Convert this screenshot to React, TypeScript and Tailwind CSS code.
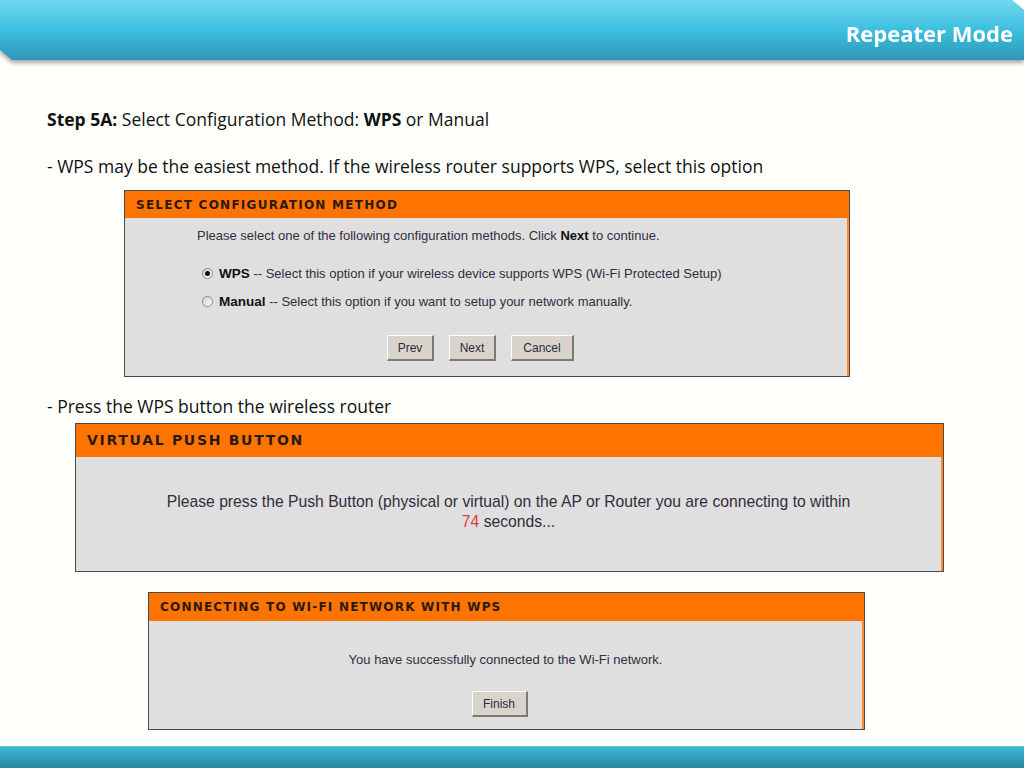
import React from "react";

const slideFont = { fontFamily: "'Open Sans', Lato, sans-serif" };
const uiFont = { fontFamily: "'Liberation Sans', Arial, sans-serif" };
const headFont = { fontFamily: "'DejaVu Sans', Verdana, sans-serif" };

function TopBar() {
  return (
    <div className="relative h-[64px] [filter:drop-shadow(0_3px_2px_rgba(0,0,0,0.35))]">
      <div className="h-[60px] bg-gradient-to-b from-[#6fd6ef] via-[#3cbfe0] to-[#2e98b5] [clip-path:polygon(0_0,1012px_0,1024px_10px,1024px_60px,12px_60px,0_50px)] flex items-center justify-end pr-[11px]">
        <span className="text-white font-bold text-[22px] pt-[6px]" style={slideFont}>
          Repeater Mode
        </span>
      </div>
    </div>
  );
}

function Radio({ checked }: { checked?: boolean }) {
  return (
    <span className="w-[11px] h-[11px] rounded-full border border-[#8a8a8a] bg-gradient-to-br from-[#d0d0d0] to-white flex items-center justify-center shrink-0">
      {checked && <span className="w-[5px] h-[5px] rounded-full bg-[#111]" />}
    </span>
  );
}

function Btn({ label, w }: { label: string; w: string }) {
  return (
    <span
      className={`${w} h-[26px] flex items-center justify-center bg-[#d8d4cc] text-[12px] text-[#2b2b40] border-t border-l border-t-white border-l-white border-r-2 border-b-2 border-r-[#7a7a7a] border-b-[#7a7a7a]`}
    >
      {label}
    </span>
  );
}

function PanelHeader({ title, h, size }: { title: string; h: string; size: string }) {
  return (
    <div className={`${h} bg-[#ff7300] flex items-center pl-[11px]`}>
      <span className={`${size} font-bold text-[#2a1a0a]`} style={headFont}>
        {title}
      </span>
    </div>
  );
}

function ConfigPanel() {
  return (
    <div className="ml-[124px] w-[726px] border border-[#4a4a4a] bg-[#dfdfdf]" style={uiFont}>
      <PanelHeader title="SELECT CONFIGURATION METHOD" h="h-[27px]" size="text-[12px] tracking-[1.25px]" />
      <div className="border-r-2 border-r-[#ff8a30] text-[13px] text-[#332d3d] pb-[15px]">
        <div className="pl-[72px] pt-[10px] leading-[15px]">
          Please select one of the following configuration methods. Click <b className="text-[#111]">Next</b> to continue.
        </div>
        <div className="pl-[77px] pt-[23px] flex items-center gap-[6px] leading-[15px]">
          <Radio checked />
          <span>
            <b className="text-[#111] text-[13.5px]">WPS</b> -- Select this option if your wireless device supports WPS (Wi-Fi Protected Setup)
          </span>
        </div>
        <div className="pl-[77px] pt-[13px] flex items-center gap-[6px] leading-[15px]">
          <Radio />
          <span>
            <b className="text-[#111] text-[13.5px]">Manual</b> -- Select this option if you want to setup your network manually.
          </span>
        </div>
        <div className="pl-[262px] pt-[26px] flex gap-[15px]">
          <Btn label="Prev" w="w-[47px]" />
          <Btn label="Next" w="w-[47px]" />
          <Btn label="Cancel" w="w-[63px]" />
        </div>
      </div>
    </div>
  );
}

function PushPanel() {
  return (
    <div className="ml-[75px] w-[869px] border border-[#4a4a4a] bg-[#dfdfdf]" style={uiFont}>
      <PanelHeader title="VIRTUAL PUSH BUTTON" h="h-[33px]" size="text-[14px] tracking-[1.7px]" />
      <div className="border-r-2 border-r-[#ff8a30] text-[15.7px] text-[#332d3d] text-center leading-[20px] pt-[35px] pb-[39px]">
        <div>Please press the Push Button (physical or virtual) on the AP or Router you are connecting to within</div>
        <div>
          <span className="text-[#e03a3a]">74</span> seconds...
        </div>
      </div>
    </div>
  );
}

function DonePanel() {
  return (
    <div className="ml-[148px] w-[717px] border border-[#4a4a4a] bg-[#dfdfdf]" style={uiFont}>
      <PanelHeader title="CONNECTING TO WI-FI NETWORK WITH WPS" h="h-[28px]" size="text-[12px] tracking-[1.2px]" />
      <div className="border-r-2 border-r-[#ff8a30] text-[13px] text-[#332d3d] pt-[31px] pb-[12px] flex flex-col items-center">
        <div className="leading-[15px]">You have successfully connected to the Wi-Fi network.</div>
        <div className="pt-[24px] pr-[12px]">
          <Btn label="Finish" w="w-[56px]" />
        </div>
      </div>
    </div>
  );
}

export default function App() {
  return (
    <div className="h-[768px] w-[1024px] bg-[#fffffc] flex flex-col overflow-hidden">
      <TopBar />
      <div className="text-[17.5px] text-[#111] leading-[20px]" style={slideFont}>
        <p className="pl-[47px] pt-[45px]">
          <b>Step 5A:</b> Select Configuration Method: <b>WPS</b> or Manual
        </p>
        <p className="pl-[47px] pt-[27px] pb-[14px]">
          - WPS may be the easiest method. If the wireless router supports WPS, select this option
        </p>
      </div>
      <ConfigPanel />
      <p className="pl-[47px] pt-[19px] pb-[7px] text-[17.5px] text-[#111] leading-[20px]" style={slideFont}>
        - Press the WPS button the wireless router
      </p>
      <PushPanel />
      <div className="pt-[20px]">
        <DonePanel />
      </div>
      <div className="mt-auto h-[22px] bg-gradient-to-b from-[#3fb8d6] to-[#2786a0] border-t border-t-[#5cc6e0]" />
    </div>
  );
}
